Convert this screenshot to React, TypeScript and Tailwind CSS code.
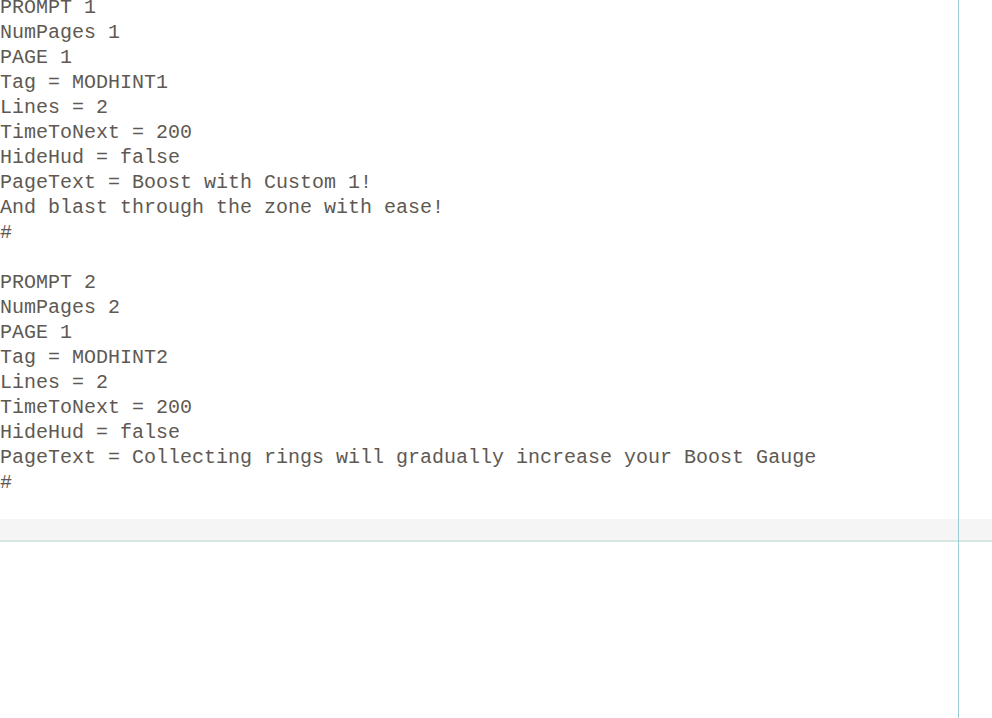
import React from "react";

const lines: string[] = [
  "PROMPT 1",
  "NumPages 1",
  "PAGE 1",
  "Tag = MODHINT1",
  "Lines = 2",
  "TimeToNext = 200",
  "HideHud = false",
  "PageText = Boost with Custom 1!",
  "And blast through the zone with ease!",
  "#",
  "",
  "PROMPT 2",
  "NumPages 2",
  "PAGE 1",
  "Tag = MODHINT2",
  "Lines = 2",
  "TimeToNext = 200",
  "HideHud = false",
  "PageText = Collecting rings will gradually increase your Boost Gauge",
  "#",
  "",
];

const App: React.FC = () => {
  return (
    <div className="relative h-[718px] w-[992px] overflow-hidden bg-white">
      <div
        className="-mt-[5px] text-[20px] leading-[25px] text-[#5e5953]"
        style={{
          fontFamily:
            '"Courier New", "Nimbus Mono PS", "FreeMono", "Liberation Mono", monospace',
        }}
      >
        {lines.map((line, i) => (
          <div key={i} className="h-[25px] whitespace-pre">
            {line}
          </div>
        ))}
      </div>
      <div className="-mt-[1px] h-[23px] border-b-2 border-[#d4e7e3] bg-[#f5f5f5]" />
      <div className="absolute top-0 bottom-0 left-[958px] w-px bg-[#9ccdd4]" />
    </div>
  );
};

export default App;
